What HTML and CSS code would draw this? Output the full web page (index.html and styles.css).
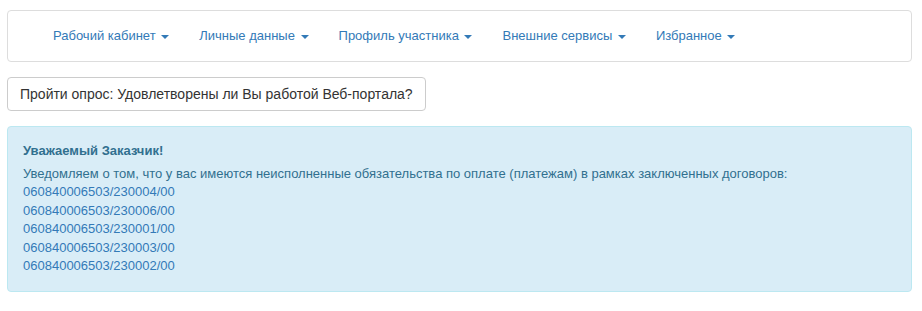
FILE: index.html
```html
<!DOCTYPE html>
<html lang="ru">
<head>
<meta charset="utf-8">
<title>Кабинет</title>
<link rel="stylesheet" href="styles.css">
</head>
<body>
<nav class="navbar">
  <ul class="nav">
    <li><a href="#">Рабочий кабинет <span class="caret"></span></a></li>
    <li><a href="#">Личные данные <span class="caret"></span></a></li>
    <li><a href="#">Профиль участника <span class="caret"></span></a></li>
    <li><a href="#">Внешние сервисы <span class="caret"></span></a></li>
    <li><a href="#">Избранное <span class="caret"></span></a></li>
  </ul>
</nav>
<div class="survey-row">
  <button class="btn" type="button">Пройти опрос: Удовлетворены ли Вы работой Веб-портала?</button>
</div>
<div class="alert">
  <div class="alert-title">Уважаемый Заказчик!</div>
  <div>Уведомляем о том, что у вас имеются неисполненные обязательства по оплате (платежам) в рамках заключенных договоров:</div>
  <a href="#">060840006503/230004/00</a>
  <a href="#">060840006503/230006/00</a>
  <a href="#">060840006503/230001/00</a>
  <a href="#">060840006503/230003/00</a>
  <a href="#">060840006503/230002/00</a>
</div>
</body>
</html>
```
FILE: styles.css
```css
* { box-sizing: border-box; }
html, body { margin: 0; padding: 0; background: #fff; }
body {
  font-family: "Liberation Sans", Arial, sans-serif;
  font-size: 13px;
  line-height: 1.42857;
  color: #333;
  padding: 10px 10px 0 7px;
  width: 922px;
}
.navbar {
  border: 1px solid #ddd;
  border-radius: 4px;
  background: #fff;
  height: 52px;
  padding-left: 30px;
}
.nav {
  list-style: none;
  margin: 0;
  padding: 0;
  display: flex;
}
.nav a {
  display: block;
  padding: 15px 15px;
  line-height: 20px;
  color: #337ab7;
  text-decoration: none;
}
.caret {
  display: inline-block;
  width: 0;
  height: 0;
  margin-left: 2px;
  vertical-align: middle;
  border-top: 4px solid;
  border-right: 4px solid transparent;
  border-left: 4px solid transparent;
}
.survey-row {
  margin-top: 15px;
  display: flex;
}
.btn {
  font-family: inherit;
  font-size: 14px;
  line-height: 20px;
  color: #333;
  background: #fff;
  border: 1px solid #ccc;
  border-radius: 4px;
  padding: 6px 12px;
  height: 34px;
}
.alert {
  margin-top: 15px;
  background: #d9edf7;
  border: 1px solid #bce8f1;
  border-radius: 4px;
  color: #31708f;
  padding: 15px;
  min-height: 166px;
}
.alert-title {
  font-weight: bold;
  margin-bottom: 4px;
}
.alert a {
  display: block;
  color: #337ab7;
  text-decoration: none;
}
```
